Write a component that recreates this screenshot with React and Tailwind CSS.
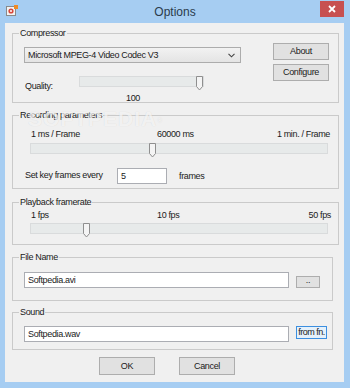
import React from 'react';

const FONT = "font-['Liberation_Sans_Narrow','Liberation_Sans',Arial,sans-serif]";

function Group({ label, className = '', children }) {
  return (
    <fieldset className={`border border-[#cacaca] ${className}`}>
      <legend className="ml-[6px] px-[1px] leading-[13px]">{label}</legend>
      {children}
    </fieldset>
  );
}

function Slider({ value, className = '' }) {
  // value is 0..1, thumb is placed along the channel
  return (
    <div className={`relative h-[11px] border border-[#d9dbdc] bg-[#e7eaea] ${className}`}>
      <svg
        className="absolute top-[-1px]"
        style={{ left: `calc(${value * 100}% - ${value * 7}px)` }}
        width="7"
        height="15"
        viewBox="0 0 7 15"
      >
        <path d="M0.5 0.5 H6.5 V10.5 L3.5 14 L0.5 10.5 Z" fill="#f4f4f4" stroke="#8f8f8f" />
      </svg>
    </div>
  );
}

function Button({ children, className = '' }) {
  return (
    <button className={`flex items-center justify-center border border-[#adadad] bg-[#e1e1e1] leading-none text-[#1a1a1a] ${className}`}>
      {children}
    </button>
  );
}

function TextBox({ value, className = '' }) {
  return (
    <div className={`flex items-center border border-[#abadb3] bg-white pl-[3px] leading-none ${className}`}>
      {value}
    </div>
  );
}

function AppIcon() {
  return (
    <svg width="12" height="12" viewBox="0 0 12 12">
      <rect x="0.5" y="1.5" width="9" height="9" fill="#f3f3f3" stroke="#8a8a8a" />
      <circle cx="5" cy="6" r="2.6" fill="#d9473b" />
      <circle cx="5" cy="6" r="1" fill="#ffffff" />
      <rect x="8" y="0" width="4" height="4" fill="#f08a24" />
    </svg>
  );
}

export default function App() {
  return (
    <div className={`flex h-[388px] w-[350px] flex-col bg-[#a6cdf2] text-[9px] tracking-[-0.35px] text-[#1a1a1a] ${FONT}`}>
      {/* Title bar */}
      <div className="relative flex h-[23px] items-center">
        <div className="ml-[6px] mt-[-2px]">
          <AppIcon />
        </div>
        <div className="flex-1 pr-[18px] text-center font-['Liberation_Sans',Arial,sans-serif] text-[12px] tracking-normal text-[#2b3a4c]">
          Options
        </div>
        <div className="absolute right-[6px] top-[1px] flex h-[16px] w-[24px] items-center justify-center bg-[#c75050]">
          <svg width="8" height="8" viewBox="0 0 8 8">
            <path d="M1 1 L7 7 M7 1 L1 7" stroke="#ffffff" strokeWidth="1.8" />
          </svg>
        </div>
      </div>

      {/* Client area */}
      <div className="relative ml-[5px] flex h-[359px] w-[339px] flex-col bg-[#f0f0f0] pl-[7px] pt-[4px]">
        <span className="pointer-events-none absolute left-[23px] top-[80px] font-['Liberation_Sans',Arial,sans-serif] text-[21px] font-bold tracking-[1px] text-white/70 [text-shadow:0_0_1px_rgba(0,0,0,0.12)]">
          SOFTPEDIA<sup className="text-[7px]">®</sup>
        </span>

        <Group label="Compressor" className="h-[76px] w-[327px]">
          <div className="flex justify-between">
            <div className="flex flex-col pl-[11px]">
              <div className="mt-[7px] flex h-[16px] w-[217px] items-center justify-between border border-[#acacac] bg-gradient-to-b from-[#f2f2f2] to-[#e4e4e4] pl-[3px] pr-[5px] leading-none">
                <span>Microsoft MPEG-4 Video Codec V3</span>
                <svg width="7" height="5" viewBox="0 0 7 5">
                  <path d="M0.5 0.8 L3.5 3.8 L6.5 0.8" fill="none" stroke="#444" strokeWidth="1.1" />
                </svg>
              </div>
              <div className="mt-[13px] flex h-[14px] items-start">
                <span className="mt-[5px] w-[55px] pl-[1px] leading-[11px]">Quality:</span>
                <Slider value={1} className="w-[125px]" />
              </div>
              <span className="ml-[102px] mt-[3px] leading-[11px]">100</span>
            </div>
            <div className="mr-[9px] mt-[3px] flex flex-col gap-[4px]">
              <Button className="h-[17px] w-[56px]">About</Button>
              <Button className="h-[17px] w-[56px]">Configure</Button>
            </div>
          </div>
        </Group>

        <Group label="Recording parameters" className="mt-[6px] h-[80px] w-[327px]">
          <div className="mt-[6px] flex pl-[18px] pr-[8px] leading-[13px]">
            <span className="w-[126px]">1 ms / Frame</span>
            <span>60000 ms</span>
            <span className="ml-auto">1 min. / Frame</span>
          </div>
          <Slider value={0.41} className="ml-[17px] mt-[2px] w-[298px]" />
          <div className="mt-[14px] flex items-center pl-[12px]">
            <span className="w-[92px]">Set key frames every</span>
            <TextBox value="5" className="h-[16px] w-[50px]" />
            <span className="ml-[12px] pt-[2px]">frames</span>
          </div>
        </Group>

        <Group label="Playback framerate" className="mt-[7px] h-[49px] w-[327px]">
          <div className="flex pl-[18px] pr-[7px] leading-[12px]">
            <span className="w-[126px]">1 fps</span>
            <span>10 fps</span>
            <span className="ml-auto">50 fps</span>
          </div>
          <Slider value={0.18} className="ml-[17px] mt-[2px] w-[298px]" />
        </Group>

        <Group label="File Name" className="mt-[6px] h-[50px] w-[321px]">
          <div className="mt-[8px] flex items-center pl-[11px]">
            <TextBox value="Softpedia.avi" className="h-[16px] w-[265px]" />
            <Button className="ml-[7px] mt-[3px] h-[12px] w-[24px] items-end pb-[2px]">..</Button>
          </div>
        </Group>

        <Group label="Sound" className="mt-[5px] h-[44px] w-[321px]">
          <div className="mt-[7px] flex items-start pl-[11px]">
            <TextBox value="Softpedia.wav" className="h-[16px] w-[265px]" />
            <button className="ml-[7px] flex h-[13px] w-[31px] items-center justify-center whitespace-nowrap border border-[#3c8fe0] bg-[#e5f1fb] leading-none tracking-[-0.5px]">
              from fn.
            </button>
          </div>
        </Group>

        <div className="mt-[7px] flex gap-[24px] pl-[87px]">
          <Button className="h-[18px] w-[56px]">OK</Button>
          <Button className="h-[18px] w-[56px]">Cancel</Button>
        </div>
      </div>
    </div>
  );
}
